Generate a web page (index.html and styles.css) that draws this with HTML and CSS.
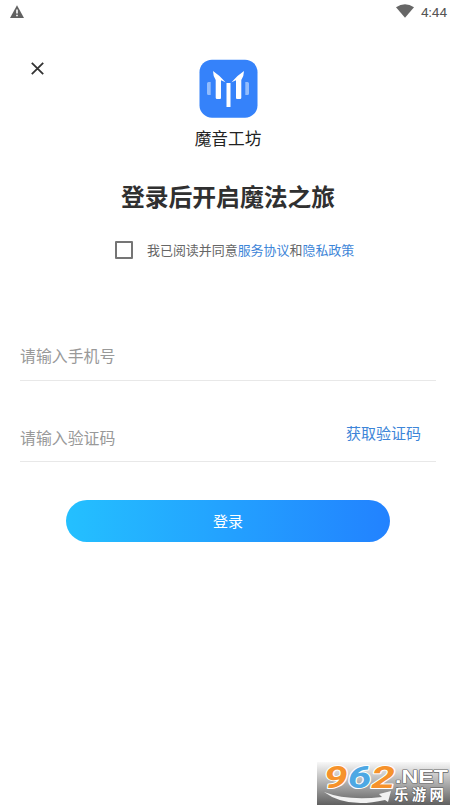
FILE: index.html
```html
<!DOCTYPE html>
<html lang="zh-CN">
<head>
<meta charset="utf-8">
<title>魔音工坊</title>
<link rel="stylesheet" href="styles.css">
</head>
<body>
<header class="status">
  <svg class="warn" width="14" height="13" viewBox="0 0 14 13"><path d="M7 .2 14 13H0z" fill="#616161"/><path d="M6.200 4.500h1.600v4H6.200zM6.200 9.700h1.600v1.600H6.200z" fill="#fff"/></svg>
  <div class="status-right">
    <svg width="18" height="14" viewBox="0 0 18 14"><path d="M0 3.3Q9-2.6 18 3.3L9 13.7z" fill="#666"/></svg>
    <span>4:44</span>
  </div>
</header>
<main class="page">
  <section class="brand">
    <svg class="close" width="13" height="13" viewBox="0 0 13 13"><path d="M.8.8 12.2 12.2M12.2.8.8 12.2" stroke="#333" stroke-width="1.8"/></svg>
    <svg class="logo" width="59" height="59" viewBox="0 0 59 59">
      <rect x=".5" y=".7" width="58" height="58" rx="12.500" fill="#3582fa"/>
      <path d="M14 12 20.500 17 26.500 23.300 22 21.300V39Q22 40 21 40H18Q16.700 40 16.700 38.700V21Q14 17 14 12zM45 12 38.500 17 32.500 23.300 37 21.300V39Q37 40 38 40H41Q42.300 40 42.300 38.700V21Q45 17 45 12zM27.500 24H31.500V48H27.500z" fill="#fff"/>
      <path d="M8 24.500Q8 23 9.500 23H11.700V36H9.500Q8 36 8 34.500zM50 24.500Q50 23 48.500 23H46.300V36H48.500Q50 36 50 34.500z" fill="#93bdfd"/>
    </svg>
    <div class="name">魔音工坊</div>
  </section>
  <h1 class="title">登录后开启魔法之旅</h1>
  <label class="agree"><span class="box"></span><span>我已阅读并同意<a>服务协议</a>和<a>隐私政策</a></span></label>
  <form class="form">
    <div class="field phone"><span>请输入手机号</span></div>
    <div class="field code"><span>请输入验证码</span><a class="get">获取验证码</a></div>
    <button class="login" type="button">登录</button>
  </form>
</main>
<aside class="mark">
  <svg width="133" height="43" viewBox="0 0 133 43">
    <g font-family="Liberation Sans, sans-serif" font-weight="bold" paint-order="stroke" stroke-linejoin="round">
      <text class="digits" x="7" y="26" font-size="32" textLength="71" lengthAdjust="spacingAndGlyphs" stroke="#fff" stroke-width="2"><tspan fill="#f6922b">9</tspan><tspan fill="#4da8e4">6</tspan><tspan fill="#f6922b">2</tspan></text>
      <text x="78" y="20.500" font-size="18" textLength="53" lengthAdjust="spacingAndGlyphs" fill="#fff" stroke="#666" stroke-width="1.200">.NET</text>
      <path d="M7 30Q30 39 65 35L62 32 74 29 71 40 68 38Q30 47 7 30z" fill="#f2f2f2"/>
      <text class="cjk" x="77" y="38" font-size="14.500" textLength="50" lengthAdjust="spacing" fill="#fff" stroke="#555" stroke-width="1">乐游网</text>
    </g>
  </svg>
</aside>
</body>
</html>
```
FILE: styles.css
```css
body {
  margin: 0;
  width: 456px;
  height: 811px;
  overflow: hidden;
  position: relative;
  background: #fff;
  color: #222;
  font-family: "Noto Sans CJK SC", sans-serif;
}
svg { display: block; overflow: visible; }
.status {
  display: flex;
  justify-content: space-between;
  align-items: flex-start;
  height: 24px;
  padding: 5px 8px 0 10px;
  box-sizing: border-box;
}
.status-right {
  display: flex;
  gap: 7px;
  font: 400 13.500px/15px Roboto, sans-serif;
  color: #555;
}
.status-right svg { margin-top: -1px; }
.status-right span { width: 27px; white-space: nowrap; }
.brand {
  position: relative;
  display: flex;
  flex-direction: column;
  align-items: center;
  padding-top: 35px;
}
.close { position: absolute; left: 31px; top: 38px; }
.name { margin-top: 8px; font-size: 16.700px; line-height: 24px; }
.title {
  margin: 29px 0 0;
  text-align: center;
  font-size: 23.800px;
  line-height: 34px;
  font-weight: 700;
  color: #303030;
}
.agree {
  display: flex;
  align-items: center;
  gap: 14px;
  margin: 27px 0 0 115px;
  font-size: 12.960px;
  line-height: 20px;
  color: #666;
}
.box {
  width: 14px;
  height: 14px;
  border: 2px solid #757575;
  border-radius: 1px;
}
a { color: #3d85d8; }
.form {
  display: flex;
  flex-direction: column;
  padding: 72px 20px 0;
}
.field {
  display: flex;
  justify-content: space-between;
  align-items: flex-start;
  border-bottom: 1px solid #e8e8e8;
  box-sizing: border-box;
  font-size: 15.900px;
  line-height: 24px;
  color: #999;
}
.phone { height: 49px; padding-top: 12px; }
.code { height: 81px; padding-top: 45px; }
.get { margin: -5px 15px 0 0; font-size: 15px; }
.login {
  align-self: center;
  width: 324px;
  height: 42px;
  margin-top: 38px;
  padding: 0;
  border: 0;
  border-radius: 21px;
  background: linear-gradient(90deg, #24c0ff, #2282ff);
  color: #fff;
  font: 15px/42px "Noto Sans CJK SC", sans-serif;
}
.mark {
  position: absolute;
  left: 317px;
  top: 762px;
  width: 133px;
  height: 43px;
  background: linear-gradient(#f8f8f8, #b5b5b5 45%, #606060);
}
.digits { font-family: Roboto, sans-serif; font-style: italic; font-weight: 700; }
.cjk { font-family: "Noto Sans CJK SC", sans-serif; }
```
